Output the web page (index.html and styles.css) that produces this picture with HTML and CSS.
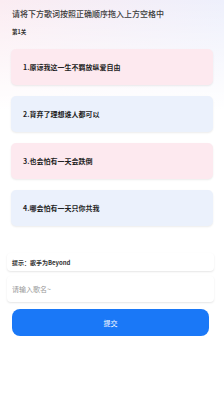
FILE: index.html
```html
<!DOCTYPE html>
<html lang="zh-CN">
<head>
  <meta charset="UTF-8">
  <title>歌词排序</title>
  <link rel="stylesheet" href="styles.css">
</head>
<body>

  <div class="page">
    <div class="title">请将下方歌词按照正确顺序拖入上方空格中</div>
    <div class="level">第1关</div>

    <div class="cards">
      <div class="card pink">1.原谅我这一生不羁放纵爱自由</div>
      <div class="card blue">2.背弃了理想谁人都可以</div>
      <div class="card pink">3.也会怕有一天会跌倒</div>
      <div class="card blue">4.哪会怕有一天只你共我</div>
    </div>

    <div class="hint">提示：歌手为Beyond</div>
    <input class="answer" type="text" placeholder="请输入歌名~">
    <button class="submit">提交</button>
  </div>

</body>
</html>
```

FILE: styles.css
```css
* {
  margin: 0;
  padding: 0;
  box-sizing: border-box;
}

body {
  background:
    linear-gradient(to bottom, rgba(255,255,255,0) 0, #fff 110px),
    linear-gradient(to right, #fbecf2, #eef0fc);
  background-repeat: no-repeat;
  height: 100vh;
  font-family: "Noto Sans CJK SC", "Noto Sans", sans-serif;
  color: #333;
}

.page {
  display: flex;
  flex-direction: column;
  padding: 8px 11px 0;
}

.title {
  font-size: 8px;
  line-height: 12px;
  font-weight: 500;
  color: #3a3a3a;
  padding-left: 1px;
}

.level {
  margin-top: 8px;
  font-size: 5.5px;
  line-height: 8px;
  font-weight: 700;
  padding-left: 1px;
}

.cards {
  display: flex;
  flex-direction: column;
  gap: 11px;
  margin-top: 13px;
}

.card {
  height: 36px;
  display: flex;
  align-items: center;
  padding-left: 12px;
  border-radius: 5px;
  font-size: 7px;
  font-weight: 700;
  color: #1e1e1e;
  box-shadow: 0 1px 2px rgba(0,0,0,0.08);
}

.card.pink { background: #fde9ef; }
.card.blue { background: #ebf1fc; }

.hint {
  margin: 27px -1px 0 -4px;
  height: 18px;
  display: flex;
  align-items: center;
  padding-left: 5px;
  background: #fff;
  border-radius: 4px;
  box-shadow: 0 1px 2px rgba(0,0,0,0.1);
  font-size: 6px;
  font-weight: 700;
  color: #333;
}

.answer {
  margin: 5px -1px 0 -4px;
  height: 26px;
  border: none;
  outline: none;
  padding-left: 5px;
  background: #fff;
  border-radius: 4px;
  box-shadow: 0 1px 2px rgba(0,0,0,0.1);
  font-family: inherit;
  font-size: 7px;
}

.answer::placeholder {
  color: #999;
}

.submit {
  margin: 7px 4px 0 1px;
  height: 27px;
  border: none;
  border-radius: 8px;
  background: #1a78f7;
  color: #fff;
  font-family: inherit;
  font-size: 7px;
}
```
